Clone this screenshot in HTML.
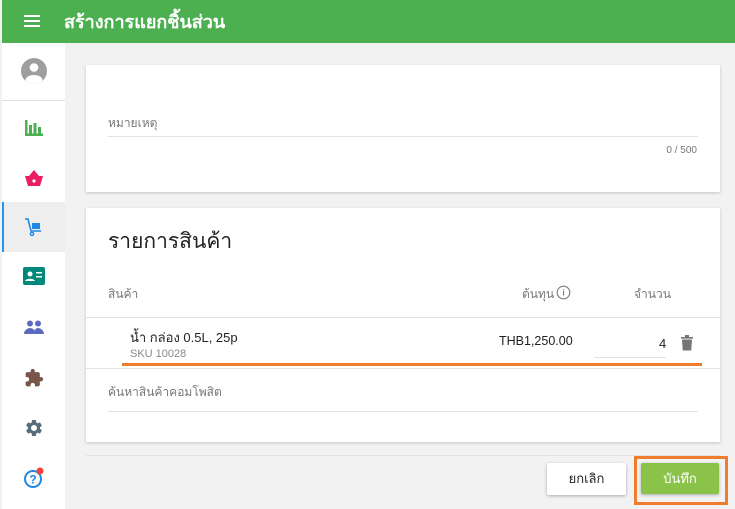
<!DOCTYPE html>
<html><head><meta charset="utf-8"><style>
*{box-sizing:border-box;margin:0;padding:0}
body{width:735px;height:509px;background:#f2f2f2;font-family:"Liberation Sans","Noto Sans CJK SC",sans-serif;position:relative;overflow:hidden}
.hdr{position:absolute;left:2px;top:0;width:733px;height:43px;background:#4caf50;color:#fff}
.hdr .t{position:absolute;left:62px;top:7px;font-size:18px;font-weight:bold}
.side{position:absolute;left:2px;top:43px;width:63px;height:466px;background:#fff}
.ic{position:absolute;left:0;width:63px;display:flex;justify-content:center}
.card{position:absolute;left:86px;width:634px;background:#fff;box-shadow:0 1px 3px rgba(0,0,0,.2)}
.lbl{position:absolute;font-size:12px;color:#777}
.line{position:absolute;height:1px;background:#e3e3e3}
</style></head><body>
<div class="hdr">
<div style="position:absolute;left:22px;top:15px;width:16px;height:2px;background:#fff;box-shadow:0 5px 0 #fff,0 10px 0 #fff"></div>
<div class="t">สร้างการแยกชิ้นส่วน</div></div>
<div class="side">
<div class="ic" style="top:14px"><svg width="28" height="28" viewBox="0 0 28 28"><defs><clipPath id="c"><circle cx="14" cy="14" r="13"/></clipPath></defs><circle cx="14" cy="14" r="13" fill="#9e9e9e"/><g clip-path="url(#c)" fill="#fff"><circle cx="14" cy="10.5" r="4.3"/><ellipse cx="14" cy="23" rx="8.5" ry="5"/></g></svg></div>
<div style="position:absolute;left:0;top:57px;width:63px;height:1px;background:#e0e0e0"></div>
<div class="ic" style="top:75px"><svg width="20" height="18" viewBox="0 0 20 18"><path fill="#4caf50" d="M1 2h2.5v13.5H19V18H1zM5 7h3v9H5zM9.5 5h3v11h-3zM14 9h3v7h-3z"/></svg></div>
<div class="ic" style="top:126px"><svg width="20" height="18" viewBox="0 0 20 18"><path fill="#e91e63" d="M5 7l5-6 5 6h4l-3 10H4L1 7z"/><circle cx="10" cy="12" r="1.6" fill="#fff"/></svg></div>
<div style="position:absolute;left:0;top:159px;width:63px;height:50px;background:#eee;border-left:2px solid #2196f3"></div>
<div class="ic" style="top:174px"><svg width="20" height="20" viewBox="0 0 20 20"><path fill="none" stroke="#1e88e5" stroke-width="1.6" d="M1 2h3l3 12h10"/><rect x="8" y="6" width="8" height="6" fill="#1e88e5"/><circle cx="8" cy="17" r="1.6" fill="none" stroke="#1e88e5" stroke-width="1.4"/></svg></div>
<div class="ic" style="top:224px"><svg width="22" height="18" viewBox="0 0 22 18"><rect width="22" height="18" rx="2" fill="#00897b"/><circle cx="7" cy="7" r="2.5" fill="#fff"/><path fill="#fff" d="M2 14c1-3 9-3 10 0zM13 5h6v1.5h-6zM13 9h6v1.5h-6z"/></svg></div>
<div class="ic" style="top:277px"><svg width="20" height="14" viewBox="0 0 20 14"><circle cx="6" cy="3.5" r="3" fill="#5c6bc0"/><circle cx="14" cy="3.5" r="3" fill="#5c6bc0"/><path fill="#5c6bc0" d="M0 14c0-4 4-6 6-6s6 2 6 6zM10 14c0-4 2-6 4-6s6 2 6 6z"/></svg></div>
<div class="ic" style="top:325px"><svg width="20" height="20" viewBox="0 0 24 24"><path fill="#795548" d="M20.5 11H19V7c0-1.1-.9-2-2-2h-4V3.5C13 2.12 11.88 1 10.5 1S8 2.12 8 3.5V5H4c-1.1 0-2 .9-2 2v3.8h1.5c1.5 0 2.7 1.2 2.7 2.7S5 16.2 3.5 16.2H2V20c0 1.1.9 2 2 2h3.8v-1.5c0-1.5 1.2-2.7 2.7-2.7s2.7 1.2 2.7 2.7V22H17c1.1 0 2-.9 2-2v-4h1.5c1.38 0 2.5-1.12 2.5-2.5S21.88 11 20.5 11z"/></svg></div>
<div class="ic" style="top:375px"><svg width="20" height="20" viewBox="0 0 24 24"><path fill="#546e7a" d="M19.14 12.94c.04-.3.06-.61.06-.94 0-.32-.02-.64-.07-.94l2.03-1.58a.49.49 0 00.12-.61l-1.92-3.32a.49.49 0 00-.59-.22l-2.39.96c-.5-.38-1.03-.7-1.62-.94l-.36-2.54a.48.48 0 00-.48-.41h-3.84c-.24 0-.43.17-.47.41l-.36 2.54c-.59.24-1.13.57-1.62.94l-2.39-.96a.49.49 0 00-.59.22L2.74 8.87c-.12.21-.08.47.12.61l2.03 1.58c-.05.3-.09.63-.09.94s.02.64.07.94l-2.03 1.58a.49.49 0 00-.12.61l1.92 3.32c.12.22.37.29.59.22l2.39-.96c.5.38 1.03.7 1.62.94l.36 2.54c.05.24.24.41.48.41h3.84c.24 0 .44-.17.47-.41l.36-2.54c.59-.24 1.13-.56 1.62-.94l2.39.96c.22.08.47 0 .59-.22l1.92-3.32c.12-.22.07-.47-.12-.61l-2.01-1.58zM12 15.6A3.6 3.6 0 1112 8.4a3.6 3.6 0 010 7.2z"/></svg></div>
<div class="ic" style="top:424px"><svg width="22" height="22" viewBox="0 0 22 22"><circle cx="10" cy="12" r="8" fill="none" stroke="#1e88e5" stroke-width="2"/><text x="10" y="16.5" font-size="12" font-weight="bold" fill="#1e88e5" text-anchor="middle" font-family="Liberation Sans">?</text><circle cx="17" cy="4" r="3.5" fill="#f44336"/></svg></div>
</div>

<div class="card" style="top:65px;height:127px">
<div class="lbl" style="left:22px;top:49px">หมายเหตุ</div>
<div class="line" style="left:22px;top:71px;width:590px"></div>
<div class="lbl" style="right:23px;top:80px;font-size:10px">0 / 500</div>
</div>

<div class="card" style="top:208px;height:234px">
<div style="position:absolute;left:22px;top:17px;font-size:21px;color:#222">รายการสินค้า</div>
<div class="lbl" style="left:22px;top:77px">สินค้า</div>
<div class="lbl" style="left:436px;top:77px">ต้นทุน</div>
<svg style="position:absolute;left:470px;top:77px" width="15" height="15" viewBox="0 0 15 15"><circle cx="7.5" cy="7.5" r="6.3" fill="none" stroke="#777" stroke-width="1.1"/><path fill="#777" d="M7 6h1.1v4.5H7zM7 4h1.1v1.1H7z"/></svg>
<div class="lbl" style="left:548px;top:77px">จำนวน</div>
<div class="line" style="left:0;top:109px;width:634px"></div>
<div style="position:absolute;left:44px;top:119px;font-size:13px;color:#222">น้ำ กล่อง 0.5L, 25p</div>
<div style="position:absolute;left:44px;top:140px;font-size:11px;color:#888">SKU 10028</div>
<div style="position:absolute;left:413px;top:126px;font-size:12.5px;color:#222">THB1,250.00</div>
<div style="position:absolute;left:573px;top:128px;font-size:13px;color:#222">4</div>
<div class="line" style="left:508px;top:149px;width:72px"></div>
<svg style="position:absolute;left:594px;top:126px" width="14" height="17" viewBox="0 0 14 17"><path fill="#757575" d="M1 3h12v1.6H1zM5 1h4v2H5zM2 5.5h10l-.8 11H2.8z"/></svg>
<div style="position:absolute;left:36px;top:155px;width:580px;height:3px;background:#ef7d2e"></div>
<div class="line" style="left:0;top:160px;width:634px"></div>
<div class="lbl" style="left:22px;top:175px;font-size:12px">ค้นหาสินค้าคอมโพสิต</div>
<div class="line" style="left:22px;top:203px;width:590px"></div>
</div>

<div class="line" style="left:86px;top:455px;width:634px"></div>
<div style="position:absolute;left:547px;top:463px;width:79px;height:32px;background:#fff;box-shadow:0 1px 3px rgba(0,0,0,.3);border-radius:2px;font-size:13px;color:#222;text-align:center;line-height:32px">ยกเลิก</div>
<div style="position:absolute;left:634px;top:456px;width:94px;height:49px;border:3px solid #ef7d2e"></div>
<div style="position:absolute;left:641px;top:463px;width:78px;height:31px;background:#8bc34a;box-shadow:0 1px 3px rgba(0,0,0,.3);border-radius:2px;font-size:13px;color:#fff;text-align:center;line-height:31px">บันทึก</div>
</body></html>
